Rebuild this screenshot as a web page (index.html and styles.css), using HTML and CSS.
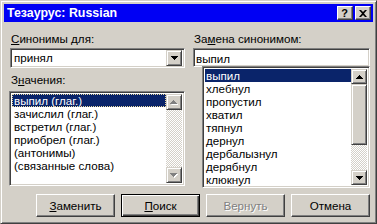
FILE: index.html
```html
<!DOCTYPE html>
<html lang="ru">
<head>
<meta charset="utf-8">
<title>Тезаурус: Russian</title>
<link rel="stylesheet" href="styles.css">
</head>
<body>
<div class="window">
  <div class="titlebar">
    <span class="title">Тезаурус: Russian</span>
    <div class="tbtns">
      <span class="tbtn q">?</span>
      <span class="tbtn x"><svg width="8" height="7" viewBox="0 0 8 7"><path d="M0 0h2l2 2 2-2h2L5 3.5 8 7H6L4 5 2 7H0l3-3.5z" fill="#000"/></svg></span>
    </div>
  </div>
  <div class="content">
    <div class="cols">
      <div class="col left">
        <div class="label"><u>С</u>инонимы для:</div>
        <div class="combo sunken">
          <span class="ctext">принял</span>
          <span class="sbtn raised"><svg width="7" height="4" viewBox="0 0 7 4"><path d="M0 0h7v1H6v1H5v1H4v1H3V3H2V2H1V1H0z" fill="#000"/></svg></span>
        </div>
        <div class="label l2">З<u>н</u>ачения:</div>
        <div class="list sunken llist">
          <div class="items">
            <div class="item sel focus">выпил (глаг.)</div>
            <div class="item">зачислил (глаг.)</div>
            <div class="item">встретил (глаг.)</div>
            <div class="item">приобрел (глаг.)</div>
            <div class="item">(антонимы)</div>
            <div class="item">(связанные слова)</div>
          </div>
          <div class="scroll">
            <span class="sbtn raised dis"><svg width="8" height="5" viewBox="0 0 8 5"><path d="M4 1h1v1h1v1h1v1h1v1H1z" fill="#fff"/><path d="M3 0h1v1h1v1h1v1h1v1H0V3h1V2h1V1h1z" fill="#808080"/></svg></span>
            <span class="track"></span>
            <span class="sbtn raised dis"><svg width="8" height="5" viewBox="0 0 8 5"><path d="M1 1h7v1H7v1H6v1H5v1H4V4H3V3H2V2H1z" fill="#fff"/><path d="M0 0h7v1H6v1H5v1H4v1H3V3H2V2H1V1H0z" fill="#808080"/></svg></span>
          </div>
        </div>
      </div>
      <div class="col right">
        <div class="label">За<u>м</u>ена синонимом:</div>
        <div class="textbox sunken">выпил</div>
        <div class="list sunken rlist">
          <div class="items">
            <div class="item sel">выпил</div>
            <div class="item">хлебнул</div>
            <div class="item">пропустил</div>
            <div class="item">хватил</div>
            <div class="item">тяпнул</div>
            <div class="item">дернул</div>
            <div class="item">дербалызнул</div>
            <div class="item">дерябнул</div>
            <div class="item">клюкнул</div>
          </div>
          <div class="scroll">
            <span class="sbtn raised"><svg width="7" height="4" viewBox="0 0 7 4"><path d="M3 0h1v1h1v1h1v1h1v1H0V3h1V2h1V1h1z" fill="#000"/></svg></span>
            <span class="thumb raised"></span>
            <span class="track"></span>
            <span class="sbtn raised"><svg width="7" height="4" viewBox="0 0 7 4"><path d="M0 0h7v1H6v1H5v1H4v1H3V3H2V2H1V1H0z" fill="#000"/></svg></span>
          </div>
        </div>
      </div>
    </div>
    <div class="buttons">
      <span class="btn"><u>З</u>аменить</span>
      <span class="btn default"><u>П</u>оиск</span>
      <span class="btn disabled">Вернуть</span>
      <span class="btn">Отмена</span>
    </div>
  </div>
</div>
</body>
</html>
```
FILE: styles.css
```css
* { box-sizing: border-box; }
html, body { margin: 0; padding: 0; }
body {
  width: 377px;
  height: 224px;
  overflow: hidden;
  font-family: "Liberation Sans", Arial, sans-serif;
  font-size: 11.6px;
  color: #000;
  background: #d4d0c8;
}
u { text-decoration: underline; text-underline-offset: 1px; }

.window {
  width: 377px;
  height: 224px;
  background: #d4d0c8;
  border: 1px solid;
  border-color: #d4d0c8 #404040 #404040 #d4d0c8;
  box-shadow: inset 1px 1px #fff, inset -1px -1px #808080;
  padding: 3px 3px 3px 3px;
  display: flex;
  flex-direction: column;
}

.titlebar {
  height: 18px;
  background: #0000f4;
  display: flex;
  align-items: center;
  justify-content: space-between;
  padding: 0 2px 0 3px;
  flex: none;
}
.title {
  color: #fff;
  font-weight: bold;
  font-size: 12.4px;
}
.tbtns { display: flex; gap: 2px; }
.tbtn {
  width: 16px;
  height: 14px;
  background: #d4d0c8;
  border: 1px solid;
  border-color: #fff #404040 #404040 #fff;
  box-shadow: inset -1px -1px #808080;
  display: flex;
  align-items: center;
  justify-content: center;
  font-weight: bold;
  font-size: 11px;
  line-height: 12px;
}
.tbtn.q { padding-right: 1px; }

.content {
  flex: 1;
  padding: 10px 3px 0 6px;
  display: flex;
  flex-direction: column;
}
.cols {
  display: flex;
  gap: 8px;
  height: 156px;
}
.col { display: flex; flex-direction: column; }
.col.left { width: 175px; }
.col.right { width: 177px; }

.label {
  height: 13px;
  line-height: 13px;
  margin-bottom: 3px;
  padding-left: 1px;
  white-space: nowrap;
}
.label.l2 { margin-top: 5px; margin-bottom: 5px; }

.sunken {
  background: #fff;
  border: 1px solid;
  border-color: #808080 #fff #fff #808080;
  box-shadow: inset 1px 1px #404040, inset -1px -1px #d4d0c8;
}
.raised {
  background: #d4d0c8;
  border: 1px solid;
  border-color: #d4d0c8 #404040 #404040 #d4d0c8;
  box-shadow: inset 1px 1px #fff, inset -1px -1px #808080;
}

.combo {
  height: 20px;
  display: flex;
  align-items: center;
  justify-content: space-between;
  padding: 2px;
}
.ctext { padding-left: 1px; line-height: 14px; }
.combo .sbtn { width: 16px; height: 16px; }

.sbtn {
  width: 16px;
  height: 16px;
  display: flex;
  align-items: center;
  justify-content: center;
  flex: none;
}

.textbox {
  height: 19px;
  padding: 2px 2px;
  line-height: 15px;
}

.list {
  display: flex;
  padding: 2px;
}
.llist { height: 95px; margin-left: -1px; width: 176px; }
.rlist { height: 122px; margin-left: 9px; margin-top: -1px; }

.items { flex: 1; display: flex; flex-direction: column; }
.item {
  height: 13px;
  line-height: 13px;
  padding-left: 2px;
  white-space: nowrap;
}
.rlist .item { padding-left: 1px; }
.item.sel { background: #0a246a; color: #fff; }
.item.focus { outline: 1px dotted #e8d9a0; outline-offset: -1px; }

.scroll {
  width: 16px;
  display: flex;
  flex-direction: column;
}
.track {
  flex: 1;
  background: repeating-conic-gradient(#d4d0c8 0 25%, #fff 0 50%) 0 0 / 2px 2px;
}
.rlist .sbtn { height: 15px; }
.thumb { height: 61px; flex: none; }

.buttons {
  display: flex;
  gap: 6px;
  margin-top: 6px;
  padding-left: 26px;
}
.btn {
  width: 80px;
  height: 23px;
  display: flex;
  align-items: center;
  justify-content: center;
  background: #d4d0c8;
  border: 1px solid;
  border-color: #fff #404040 #404040 #fff;
  box-shadow: inset -1px -1px #808080;
}
.btn.default {
  border-color: #000;
  box-shadow: inset 1px 1px #fff, inset -1px -1px #404040, inset -2px -2px #808080;
}
.btn.disabled {
  color: #808080;
  text-shadow: 1px 1px #fff;
}
```
